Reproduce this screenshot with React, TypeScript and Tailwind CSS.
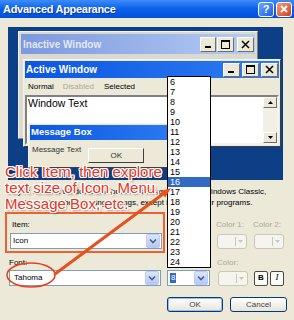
import React from "react";

const sizes = [6, 7, 8, 9, 10, 11, 12, 13, 14, 15, 16, 17, 18, 19, 20, 21, 22, 23, 24];

const outline =
  "[text-shadow:1px_0_0_#fff,-1px_0_0_#fff,0_1px_0_#fff,0_-1px_0_#fff,1px_1px_0_#fff,-1px_-1px_0_#fff,1px_-1px_0_#fff,-1px_1px_0_#fff,2px_2px_2px_rgba(0,0,0,0.35)]";

function Glyph({ kind }: { kind: "min" | "max" | "close" }) {
  if (kind === "min")
    return (
      <svg width="9" height="9" viewBox="0 0 9 9">
        <rect x="1" y="6" width="6" height="2" fill="#000" />
      </svg>
    );
  if (kind === "max")
    return (
      <svg width="9" height="9" viewBox="0 0 9 9">
        <rect x="0.5" y="0.5" width="8" height="8" fill="none" stroke="#000" />
        <rect x="0" y="0" width="9" height="2" fill="#000" />
      </svg>
    );
  return (
    <svg width="9" height="9" viewBox="0 0 9 9">
      <path d="M1 1 L8 8 M8 1 L1 8" stroke="#000" strokeWidth="1.5" />
    </svg>
  );
}

function CapBtn({ kind, w = 16, h = 15 }: { kind: "min" | "max" | "close"; w?: number; h?: number }) {
  return (
    <div
      className="flex items-center justify-center bg-[#ece9d8] border border-t-white border-l-white border-r-[#716f64] border-b-[#716f64]"
      style={{ width: w, height: h }}
    >
      <Glyph kind={kind} />
    </div>
  );
}

function ComboArrow() {
  return (
    <div className="w-[14px] h-[14px] rounded-[2px] border border-[#b9cdf8] bg-gradient-to-b from-[#dce7fe] to-[#b4c8f6] flex items-center justify-center">
      <svg width="8" height="6" viewBox="0 0 8 6">
        <path d="M1 1.5 L4 4.5 L7 1.5" fill="none" stroke="#4d6185" strokeWidth="1.6" />
      </svg>
    </div>
  );
}

function ColorBtn() {
  return (
    <div className="w-[30px] h-[15px] rounded-[3px] border border-[#c9c7ba] bg-[#f5f4ef] flex items-center justify-end pr-[3px] gap-[2px]">
      <div className="w-px h-[9px] bg-[#c9c7ba]" />
      <svg width="5" height="3" viewBox="0 0 5 3">
        <path d="M0 0 L5 0 L2.5 3 Z" fill="#c9c7ba" />
      </svg>
    </div>
  );
}

function ScrollBtn({ up }: { up?: boolean }) {
  return (
    <div className="w-[14px] h-[11px] bg-[#ece9d8] border border-t-white border-l-white border-r-[#716f64] border-b-[#716f64] flex items-center justify-center">
      <svg width="5" height="3" viewBox="0 0 5 3">
        <path d={up ? "M0 3 L5 3 L2.5 0 Z" : "M0 0 L5 0 L2.5 3 Z"} fill="#000" />
      </svg>
    </div>
  );
}

export default function App() {
  return (
    <div className="relative w-[294px] h-[320px] overflow-hidden bg-[#ece9d8] font-['Liberation_Sans',Arial,sans-serif] text-black">
      {/* title bar */}
      <div className="h-[18px] flex items-center pl-[3px] pr-[2px] bg-gradient-to-b from-[#3c8cf8] via-[#0a5fea] to-[#0550dc]">
        <span className="text-[11px] font-bold text-white tracking-[-0.3px] [text-shadow:1px_1px_0_#0a3a9a]">
          Advanced Appearance
        </span>
        <div className="ml-auto flex gap-[2px] items-center">
          <div className="w-[16px] h-[15px] rounded-[3px] border border-white bg-gradient-to-br from-[#6aa6ff] to-[#1b5fe0] flex items-center justify-center text-white text-[11px] font-bold leading-none">
            ?
          </div>
          <div className="w-[16px] h-[15px] rounded-[3px] border border-white bg-gradient-to-br from-[#f29a7a] to-[#d23c14] flex items-center justify-center">
            <svg width="8" height="8" viewBox="0 0 8 8">
              <path d="M1 1 L7 7 M7 1 L1 7" stroke="#fff" strokeWidth="1.8" />
            </svg>
          </div>
        </div>
      </div>

      {/* preview */}
      <div className="ml-[8px] mt-[9px] w-[275px] h-[153px] relative bg-[#0c3f86] overflow-hidden">
        {/* inactive window */}
        <div className="absolute left-[10px] top-[4px] w-[240px] h-[108px] bg-[#dcd9cf] p-[2px] border border-t-[#f4f3ee] border-l-[#f4f3ee] border-r-[#808080] border-b-[#808080]">
          <div className="h-[20px] flex items-center pl-[2px] pr-[1px] bg-gradient-to-r from-[#7d98de] to-[#b6cdf4]">
            <span className="text-[10px] font-bold text-[#e2e8f6]">Inactive Window</span>
            <div className="ml-auto flex items-center">
              <CapBtn kind="min" />
              <div className="ml-[1px]">
                <CapBtn kind="max" w={17} />
              </div>
              <div className="ml-[3px]">
                <CapBtn kind="close" w={17} />
              </div>
            </div>
          </div>
        </div>

        {/* active window */}
        <div className="absolute left-[15px] top-[32px] w-[258px] bg-[#ece9d8] p-[1px] border border-t-[#f4f3ee] border-l-[#f4f3ee] border-r-[#404040] border-b-[#404040]">
          <div className="h-[17px] flex items-center pl-[1px] pr-[1px] bg-gradient-to-r from-[#0a56e2] to-[#2f7cf2]">
            <span className="text-[10px] font-bold text-white">Active Window</span>
            <div className="ml-auto flex items-center gap-[2px]">
              <CapBtn kind="min" w={17} h={14} />
              <CapBtn kind="max" w={17} h={14} />
              <CapBtn kind="close" w={17} h={14} />
            </div>
          </div>
          <div className="h-[17px] flex items-center pl-[3px] text-[8px]">
            <span>Normal</span>
            <span className="ml-[9px] text-[#aca899]">Disabled</span>
            <span className="ml-[10px]">Selected</span>
          </div>
          <div className="h-[50px] bg-white border-2 border-t-[#808080] border-l-[#808080] border-r-[#f4f3ee] border-b-[#f4f3ee] flex">
            <span className="pl-[1px] pt-[1px] text-[10.5px] leading-[11px]">Window Text</span>
            <div className="ml-auto flex flex-col h-full bg-[#f1efe6]">
              <ScrollBtn up />
              <div className="flex-1" />
              <ScrollBtn />
            </div>
          </div>
        </div>

        {/* message box */}
        <div className="absolute left-[20px] top-[96px] w-[162px] bg-[#ece9d8] p-[1px] border border-t-[#f4f3ee] border-l-[#f4f3ee] border-r-[#404040] border-b-[#404040]">
          <div className="h-[15px] flex items-center pl-[1px] bg-gradient-to-r from-[#0a56e2] to-[#2f7cf2]">
            <span className="text-[9.5px] font-bold text-white">Message Box</span>
          </div>
          <div className="h-[26px] flex items-start pl-[2px]">
            <span className="mt-[5px] text-[8px] leading-[10px] text-[#333]">Message Text</span>
            <div className="ml-[7px] mt-[8px] w-[56px] h-[15px] flex items-center justify-center text-[8px] text-[#333] bg-[#ece9d8] border border-t-white border-l-white border-r-[#404040] border-b-[#404040]">
              OK
            </div>
          </div>
        </div>
      </div>

      <p className="mt-[6px] pl-[11px] text-[8px] leading-[11px] whitespace-nowrap">
        If you select a windows and buttons setting other than Windows Classic,
        <br />
        it will override the following settings, except in some older programs.
      </p>

      {/* item row */}
      <div className="mt-[12px] h-[10px] flex text-[8px] leading-[10px]">
        <span className="ml-[12px] w-[155px]">Item:</span>
        <span className="w-[49px]">Size:</span>
        <span className="w-[37px] text-[#aca899]">Color 1:</span>
        <span className="text-[#aca899]">Color 2:</span>
      </div>
      <div className="mt-[3px] h-[16px] flex items-center">
        <div className="ml-[10px] w-[152px] h-[16px] bg-white border border-[#7f9db9] flex items-center pl-[2px] pr-px text-[8px]">
          <span>Icon</span>
          <div className="ml-auto">
            <ComboArrow />
          </div>
        </div>
        <div className="ml-[5px] w-[43px] h-[16px] bg-white border border-[#7f9db9]" />
        <div className="ml-[7px]">
          <ColorBtn />
        </div>
        <div className="ml-[7px]">
          <ColorBtn />
        </div>
      </div>

      {/* font row */}
      <div className="mt-[9px] h-[10px] flex text-[8px] leading-[10px]">
        <span className="ml-[9px] w-[158px]">Font:</span>
        <span className="w-[50px]">Size:</span>
        <span className="text-[#aca899]">Color:</span>
      </div>
      <div className="mt-[2px] h-[16px] flex items-center">
        <div className="ml-[9px] w-[152px] h-[16px] bg-white border border-[#7f9db9] flex items-center pl-[4px] pr-px text-[8px]">
          <span>Tahoma</span>
          <div className="ml-auto">
            <ComboArrow />
          </div>
        </div>
        <div className="ml-[6px] w-[43px] h-[16px] bg-white border border-[#7f9db9] flex items-center pl-[2px] pr-px text-[8px]">
          <span className="bg-[#316ac5] text-white px-px leading-[10px]">8</span>
          <div className="ml-auto">
            <ComboArrow />
          </div>
        </div>
        <div className="ml-[8px]">
          <ColorBtn />
        </div>
        <div className="ml-[6px] w-[14px] h-[15px] rounded-[2px] border border-[#4a4a4a] bg-[#fbfbf8] flex items-center justify-center text-[8px] font-bold">
          B
        </div>
        <div className="ml-[2px] w-[14px] h-[15px] rounded-[2px] border border-[#4a4a4a] bg-[#fbfbf8] flex items-center justify-center text-[9px] italic font-['Liberation_Serif',serif]">
          I
        </div>
      </div>

      {/* dialog buttons */}
      <div className="mt-[11px] h-[15px] flex text-[8px] text-[#444]">
        <div className="ml-[167px] w-[56px] h-[15px] rounded-[3px] border border-[#003c74] bg-gradient-to-b from-white to-[#e6e4da] flex items-center justify-center shadow-[inset_0_0_0_1px_#9fbcef]">
          OK
        </div>
        <div className="ml-[7px] w-[57px] h-[15px] rounded-[3px] border border-[#003c74] bg-gradient-to-b from-white to-[#e6e4da] flex items-center justify-center">
          Cancel
        </div>
      </div>

      {/* open size list */}
      <div className="absolute left-[167px] top-[76px] w-[44px] bg-white border border-black">
        {sizes.map((s) => (
          <div
            key={s}
            className={
              s === 16
                ? "h-[10px] leading-[10px] text-[9px] pl-[2px] bg-[#316ac5] text-white"
                : "h-[10px] leading-[10px] text-[9px] pl-[2px]"
            }
          >
            {s}
          </div>
        ))}
      </div>

      {/* annotation */}
      <div className="absolute left-[5px] top-[212px] w-[160px] h-[41px] border-2 border-[#ec6232]" />
      <div className={`absolute left-[5px] top-[164px] text-[15px] leading-[16px] text-[#e8341c] whitespace-nowrap ${outline}`}>
        Click Item, then explore
        <br />
        text size of Icon, Menu,
        <br />
        Message Box, etc.
      </div>
      <svg className="absolute inset-0 pointer-events-none" width="294" height="320" viewBox="0 0 294 320">
        <ellipse cx="31" cy="275" rx="24" ry="12" fill="none" stroke="#e8401c" strokeWidth="1.5" />
        <line x1="55" y1="274" x2="163" y2="194" stroke="#e8501c" strokeWidth="3" strokeLinecap="round" />
        <path d="M171 188 L165.2 197.6 L160.4 191.2 Z" fill="#e8501c" />
      </svg>
    </div>
  );
}
